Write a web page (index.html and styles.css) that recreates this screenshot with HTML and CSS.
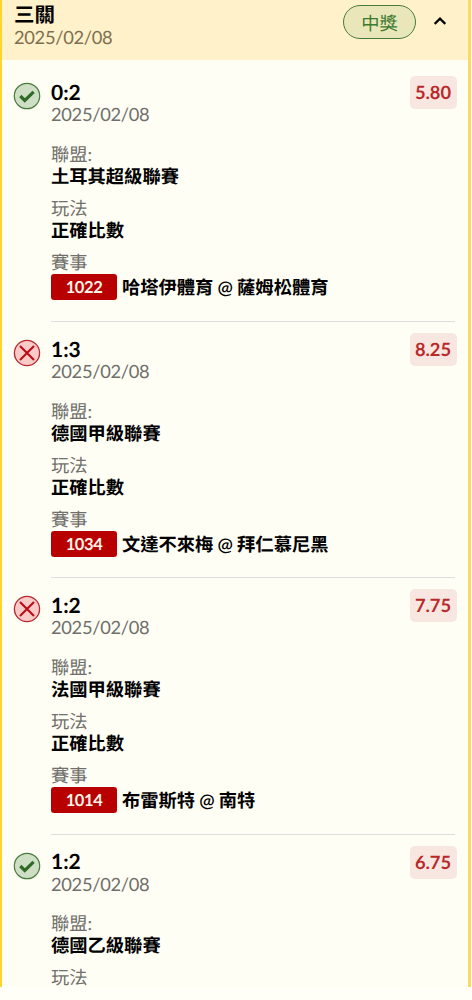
FILE: index.html
```
<!DOCTYPE html>
<html lang="zh-Hant">
<head>
<meta charset="utf-8">
<title>三關</title>
<link rel="stylesheet" href="styles.css">
</head>
<body>
<svg width="0" height="0" class="defs">
  <symbol id="win" viewBox="0 0 28 28"><circle cx="14" cy="14" r="12.7" fill="#cfdfc6" stroke="#487b3d" stroke-width="1.2"/><path d="M7.3 14l4.5 4.5 8.8-8.6" fill="none" stroke="#2f6b25" stroke-width="3.2"/></symbol>
  <symbol id="lose" viewBox="0 0 28 28"><circle cx="14" cy="14" r="12.6" fill="#f8cbc8" stroke="#b8252b" stroke-width="1.3"/><path d="M7 7l14 14M21 7L7 21" fill="none" stroke="#b80d16" stroke-width="2.1"/></symbol>
</svg>
<main class="card">
  <header class="head">
    <div class="heading"><h1 class="title">三關</h1><div class="date head-date">2025/02/08</div></div>
    <span class="status">中獎</span>
    <svg class="chevron" viewBox="0 0 14 10"><path d="M1.7 7.9L7 2.6l5.3 5.3" fill="none" stroke="#000" stroke-width="2.2"/></svg>
  </header>
  <section class="leg">
    <svg class="result"><use href="#win"/></svg>
    <div class="body">
      <div class="score">0:2</div><div class="date">2025/02/08</div>
      <dl class="info"><dt>聯盟:</dt><dd>土耳其超級聯賽</dd><dt>玩法</dt><dd>正確比數</dd><dt>賽事</dt><dd class="match"><span class="code">1022</span><span class="teams">哈塔伊體育 @ 薩姆松體育</span></dd></dl>
    </div>
    <span class="odds">5.80</span>
  </section>
  <section class="leg">
    <svg class="result"><use href="#lose"/></svg>
    <div class="body">
      <div class="score">1:3</div><div class="date">2025/02/08</div>
      <dl class="info"><dt>聯盟:</dt><dd>德國甲級聯賽</dd><dt>玩法</dt><dd>正確比數</dd><dt>賽事</dt><dd class="match"><span class="code">1034</span><span class="teams">文達不來梅 @ 拜仁慕尼黑</span></dd></dl>
    </div>
    <span class="odds">8.25</span>
  </section>
  <section class="leg">
    <svg class="result"><use href="#lose"/></svg>
    <div class="body">
      <div class="score">1:2</div><div class="date">2025/02/08</div>
      <dl class="info"><dt>聯盟:</dt><dd>法國甲級聯賽</dd><dt>玩法</dt><dd>正確比數</dd><dt>賽事</dt><dd class="match"><span class="code">1014</span><span class="teams">布雷斯特 @ 南特</span></dd></dl>
    </div>
    <span class="odds">7.75</span>
  </section>
  <section class="leg">
    <svg class="result"><use href="#win"/></svg>
    <div class="body">
      <div class="score">1:2</div><div class="date">2025/02/08</div>
      <dl class="info"><dt>聯盟:</dt><dd>德國乙級聯賽</dd><dt>玩法</dt></dl>
    </div>
    <span class="odds">6.75</span>
  </section>
</main>
</body>
</html>
```
FILE: styles.css
```
* { box-sizing: border-box; }
html, body { margin: 0; height: 1000px; overflow: hidden; background: #fffef7; }
body { font-family: Lato, "Noto Sans CJK TC", sans-serif; font-size: 18.3px; color: #000; text-rendering: geometricPrecision; }
.defs { display: none; }
.card { width: 471px; height: 987px; border-left: 2px solid #ffd52b; border-right: 3px solid #fadb5c; background: #fffef5; }
.head { display: flex; align-items: flex-start; height: 60px; padding: 4px 21px 0 12px; background: #fff2cb; }
.heading { flex: 1; }
.title { margin: 0; font-size: 20.5px; line-height: 22px; font-weight: 600; }
.date { line-height: 22px; color: #706f6b; letter-spacing: -0.3px; }
.head-date { color: #7d7050; margin-top: -0.5px; }
.status { width: 73px; height: 34px; margin-top: 1px; border: 1.3px solid #477b3b; border-radius: 17px; background: #e9e7b9; color: #3b7930; text-align: center; line-height: 34px; }
.chevron { width: 14px; height: 10px; margin: 12px 0 0 17px; }
.leg { display: flex; align-items: flex-start; height: 256.5px; padding: 0 11px 0 11px; }
.leg:nth-of-type(1) { height: 261.5px; padding-top: 5px; }
.leg:last-child { height: auto; }
.result { width: 28px; height: 28px; margin-top: 17px; flex: none; }
.body { width: 404px; height: 256.7px; margin-left: 10px; padding-top: 17px; flex: none; border-bottom: 1px solid #dedddb; }
.leg:last-child .body { border: 0; height: auto; padding-top: 16.6px; }
.score { font-size: 21px; line-height: 22px; margin-bottom: -0.6px; font-weight: 700; }
.info { margin: 17.6px 0 0; }
.leg:nth-of-type(2) .info { margin-top: 18.1px; }
.leg:last-child .info { margin-top: 17.1px; }
.info dt { line-height: 22px; color: #706f6b; }
.info dd { margin: 0 0 10px; line-height: 22px; font-weight: 600; }
.info .match { display: flex; align-items: center; gap: 5px; margin: 1px 0 0; height: 26px; white-space: nowrap; }
.code { width: 66px; height: 26px; border-radius: 3px; background: #b90000; color: #fff4ea; font-size: 16.5px; font-weight: 700; line-height: 26px; text-align: center; letter-spacing: -0.4px; }
.teams { word-spacing: -0.4px; }
.odds { flex: none; width: 47px; height: 33px; margin: 11px 0 0 -45.5px; border-radius: 5px; background: #f8e6e1; color: #b92929; font-weight: 700; text-align: center; line-height: 33px; }
```
